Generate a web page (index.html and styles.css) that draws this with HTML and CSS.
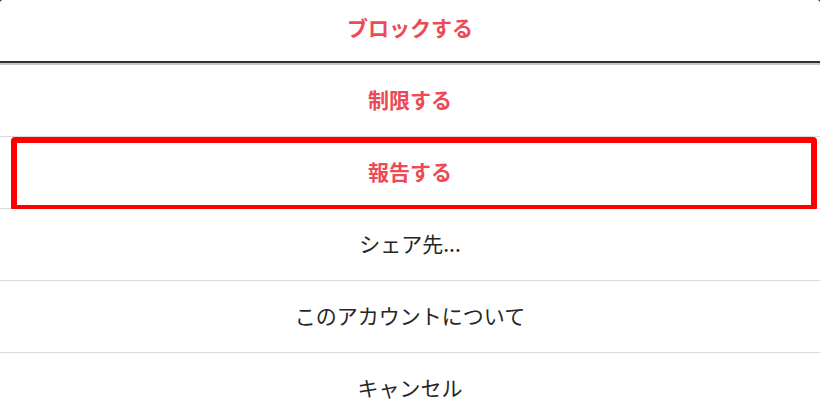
FILE: index.html
```html
<!DOCTYPE html>
<html lang="ja">
<head>
  <meta charset="UTF-8" />
  <meta name="viewport" content="width=device-width, initial-scale=1" />
  <title>メニュー</title>
  <link rel="stylesheet" href="styles.css">
</head>
<body>

  <div class="sheet">
    <button class="item danger first">ブロックする</button>
    <button class="item danger">制限する</button>
    <button class="item danger marked">
      報告する
      <span class="highlight"></span>
    </button>
    <button class="item">シェア先...</button>
    <button class="item">このアカウントについて</button>
    <button class="item">キャンセル</button>
  </div>

</body>
</html>
```

FILE: styles.css
```css
body {
  margin: 0;
  background: #4a4a4a;
  font-family: "Noto Sans CJK JP", "Noto Sans", sans-serif;
}

.sheet {
  background: #fff;
  border-radius: 4px 4px 0 0;
  display: flex;
  flex-direction: column;
  overflow: hidden;
}

.item {
  position: relative;
  display: flex;
  align-items: center;
  justify-content: center;
  box-sizing: border-box;
  height: 72px;
  flex-shrink: 0;
  padding: 0 0 4px;
  border: none;
  border-bottom: 1px solid #dbdbdb;
  background: #fff;
  font-family: inherit;
  font-size: 21px;
  color: #262626;
  cursor: pointer;
}

.item.first {
  height: 63px;
  padding-bottom: 8px;
  border-bottom: 2px solid #333;
  box-shadow: 0 2px 0 #c8c8c8;
  margin-bottom: 2px;
}

.item.danger {
  color: #ed4956;
  font-weight: 700;
}

.highlight {
  position: absolute;
  left: 11px;
  right: 3px;
  top: 0;
  bottom: -3px;
  border: 6px solid #ff0000;
  border-radius: 4px;
  pointer-events: none;
}
```
